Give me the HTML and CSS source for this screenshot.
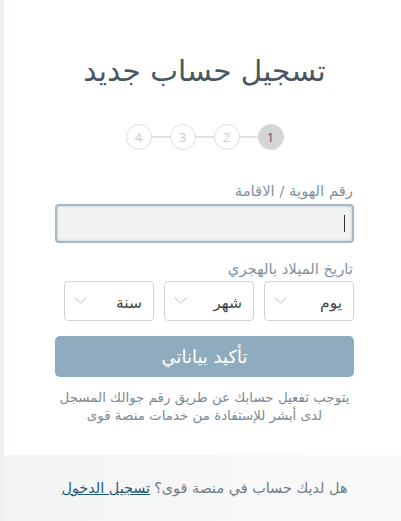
FILE: index.html
```html
<!DOCTYPE html>
<html lang="ar" dir="rtl">
<head>
<meta charset="utf-8">
<title>تسجيل حساب جديد</title>
<link rel="stylesheet" href="styles.css">
</head>
<body>
<div class="card">
  <main class="content">
    <h1 class="title">تسجيل حساب جديد</h1>
    <div class="steps">
      <span class="step active">1</span>
      <span class="line"></span>
      <span class="step">2</span>
      <span class="line"></span>
      <span class="step">3</span>
      <span class="line"></span>
      <span class="step">4</span>
    </div>
    <form class="form">
      <label class="label">رقم الهوية / الاقامة</label>
      <div class="input"><span class="caret"></span></div>
      <label class="label label-date">تاريخ الميلاد بالهجري</label>
      <div class="selects">
        <div class="select"><span>يوم</span><svg class="chev" width="13" height="7" viewBox="0 0 13 7"><path d="M0.5 0.5 L6.5 6 L12.5 0.5" fill="none" stroke="#b9bfc5" stroke-width="1"/></svg></div>
        <div class="select"><span>شهر</span><svg class="chev" width="13" height="7" viewBox="0 0 13 7"><path d="M0.5 0.5 L6.5 6 L12.5 0.5" fill="none" stroke="#b9bfc5" stroke-width="1"/></svg></div>
        <div class="select"><span>سنة</span><svg class="chev" width="13" height="7" viewBox="0 0 13 7"><path d="M0.5 0.5 L6.5 6 L12.5 0.5" fill="none" stroke="#b9bfc5" stroke-width="1"/></svg></div>
      </div>
      <button type="button" class="btn">تأكيد بياناتي</button>
      <p class="note">يتوجب تفعيل حسابك عن طريق رقم جوالك المسجل<br>لدى أبشر للإستفادة من خدمات منصة قوى</p>
    </form>
  </main>
  <footer class="footer">
    <span>هل لديك حساب في منصة قوى؟</span> <a href="#" class="link">تسجيل الدخول</a>
  </footer>
</div>
</body>
</html>
```
FILE: styles.css
```css
* { box-sizing: border-box; }
html, body { height: 100%; }
body {
  margin: 0;
  background: #edf1f4;
  font-family: "DejaVu Sans", "Noto Sans", sans-serif;
  overflow: hidden;
}
.card {
  margin-left: 4px;
  min-height: 100%;
  background: #fff;
  border-top-left-radius: 3px;
  display: flex;
  flex-direction: column;
}
.content {
  flex: 1;
  display: flex;
  flex-direction: column;
  align-items: center;
  padding-left: 4px;
}
.title {
  margin: 53px 0 0;
  font-size: 29.5px;
  font-weight: normal;
  color: #4b5663;
  line-height: 36px;
  height: 36px;
}
.steps {
  margin-top: 35px;
  display: flex;
  align-items: center;
}
.step {
  width: 26px;
  height: 26px;
  border-radius: 50%;
  border: 1px solid #dedede;
  color: #c9c9c9;
  font-family: "Open Sans", sans-serif;
  font-size: 13px;
  display: flex;
  align-items: center;
  justify-content: center;
  background: #fff;
}
.step.active {
  background: #d5d5d5;
  border-color: #d5d5d5;
  color: #555;
}
.line {
  width: 18px;
  height: 2px;
  background: #e2e2e2;
}
.form {
  width: 299px;
  margin-top: 31px;
  display: flex;
  flex-direction: column;
}
.label {
  font-size: 14.8px;
  color: #8391a0;
  line-height: 20px;
  text-align: right;
  padding-right: 1px;
}
.input {
  margin-top: 3px;
  height: 39px;
  background: #f1f2f2;
  border: 2px solid #a5b8c6;
  border-radius: 4px;
  box-shadow: inset 0 0 3px rgba(120,140,160,.45);
  display: flex;
  align-items: center;
  padding-right: 7px;
}
.caret {
  width: 1px;
  height: 17px;
  background: #333;
}
.label-date { margin-top: 16px; }
.selects {
  margin-top: 2px;
  display: flex;
  gap: 10px;
  padding-left: 9px;
}
.select {
  flex: 1;
  height: 40px;
  border: 1px solid #cfd3d7;
  border-radius: 4px;
  display: flex;
  align-items: center;
  justify-content: space-between;
  padding: 4px 11px 0 9px;
  font-size: 15.5px;
  color: #444;
}
.chev { margin-top: -6px; }
.btn {
  margin-top: 15px;
  height: 41px;
  border: 0;
  border-radius: 5px;
  background: #8eacbe;
  color: #fff;
  font-family: inherit;
  font-size: 18px;
  padding: 0;
}
.note {
  margin: 12px 0 0;
  text-align: center;
  font-size: 13.4px;
  line-height: 18px;
  color: #7e8992;
}
.footer {
  height: 66px;
  background: linear-gradient(to right, #f3f4f4, #fafafa);
  display: flex;
  align-items: center;
  justify-content: center;
  gap: 4px;
  font-size: 14.4px;
  color: #6f7a84;
  padding-left: 4px;
}
.link {
  color: #1f5a76;
  text-decoration: underline;
}
```
